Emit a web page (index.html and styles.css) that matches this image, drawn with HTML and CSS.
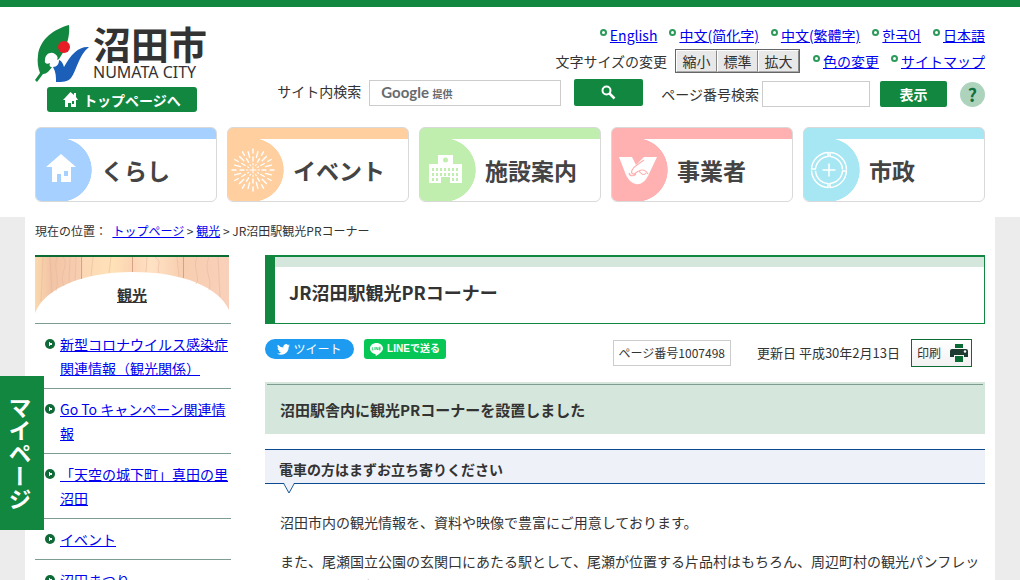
FILE: index.html
```html
<!DOCTYPE html>
<html lang="ja">
<head>
<meta charset="utf-8">
<meta name="viewport" content="width=device-width, initial-scale=1">
<title>JR沼田駅観光PRコーナー｜沼田市</title>
<link rel="stylesheet" href="styles.css">
</head>
<body>
<header class="site-header">
  <div class="inner">
    <div class="masthead">
      <div class="brand">
        <a class="logo" href="#">
          <svg class="logo-mark" viewBox="0 0 54 58" aria-hidden="true">
            <path fill="#12873f" d="M34 0C19 4 5 14 3 30C2 37 3 43 5 48L0 55L2 57L8 49C12 49 14 46 17 42C15 42 14 41 15 38C12 40 9 38 10 35C10 29 16 26 20 29C23 31 23 33 22 35L24 34L29 26C33 17 35 8 34 0Z"/>
            <path fill="#1c5fb8" d="M54 22C44 21 36 29 29 42C28 39 27 36 24 35C24 39 22 42 18 42C21 47 21 52 21 57C27 57 33 57 36 53C42 45 43 31 54 22Z"/>
            <circle cx="29" cy="22" r="6" fill="#e81c24"/>
          </svg>
          <span class="logo-text"><span class="logo-name">沼田市</span><span class="logo-roman">NUMATA CITY</span></span>
        </a>
        <a class="home-button" href="#">
          <svg width="15" height="15" viewBox="0 0 15 15" aria-hidden="true"><path fill="#fff" fill-rule="evenodd" d="M7.5 0L11 3V1h2v4l2 3h-2v7H8v-4H5v4H2V8H0zM9 9v3h2V9z"/></svg>
          トップページへ
        </a>
      </div>
      <div class="tools">
        <ul class="link-row">
          <li><a href="#" lang="en">English</a></li>
          <li><a href="#">中文(简化字)</a></li>
          <li><a href="#">中文(繁體字)</a></li>
          <li><a href="#" lang="ko">한국어</a></li>
          <li><a href="#">日本語</a></li>
        </ul>
        <div class="setting-row">
          <span>文字サイズの変更</span>
          <div class="size-buttons"><button type="button">縮小</button><button type="button">標準</button><button type="button">拡大</button></div>
          <ul class="link-row">
            <li><a href="#">色の変更</a></li>
            <li><a href="#">サイトマップ</a></li>
          </ul>
        </div>
        <div class="search-row">
          <form class="site-search">
            <label for="q">サイト内検索</label>
            <div class="search-field">
              <input id="q" type="text">
              <span class="provider">Google <small>提供</small></span>
            </div>
            <button type="button" class="green-button search-button" aria-label="検索">
              <svg width="15" height="15" viewBox="0 0 15 15" aria-hidden="true"><circle cx="5.5" cy="5.5" r="4" fill="none" stroke="#fff" stroke-width="2"/><path d="M8.5 8.5L13.5 13.5" stroke="#fff" stroke-width="2.5"/></svg>
            </button>
          </form>
          <form class="number-search">
            <label for="num">ページ番号検索</label>
            <input id="num" type="text">
            <button type="button" class="green-button show-button">表示</button>
            <a class="help" href="#">?</a>
          </form>
        </div>
      </div>
    </div>
    <nav class="global-nav">
      <a class="card blue" href="#"><span class="disc"><svg viewBox="0 0 44 44" aria-hidden="true"><path fill="#fff" fill-rule="evenodd" d="M22 6L37 19H32V34H22V26H18V34H13V19H7zM25 23v5h4v-5z"/></svg></span><span class="card-label">くらし</span></a>
      <a class="card orange" href="#"><span class="disc"><svg viewBox="0 0 44 44" aria-hidden="true">
        <defs><g id="rays"><path d="M22 1v4M22 9v4"/><path d="M22 3v6" transform="rotate(15 22 22)"/><path d="M22 15.5v1.5" stroke-width="1"/></g></defs>
        <g stroke="#fff" stroke-width="1.4" stroke-linecap="round">
          <use href="#rays"/><use href="#rays" transform="rotate(30 22 22)"/><use href="#rays" transform="rotate(60 22 22)"/><use href="#rays" transform="rotate(90 22 22)"/><use href="#rays" transform="rotate(120 22 22)"/><use href="#rays" transform="rotate(150 22 22)"/><use href="#rays" transform="rotate(180 22 22)"/><use href="#rays" transform="rotate(210 22 22)"/><use href="#rays" transform="rotate(240 22 22)"/><use href="#rays" transform="rotate(270 22 22)"/><use href="#rays" transform="rotate(300 22 22)"/><use href="#rays" transform="rotate(330 22 22)"/>
          <path stroke-width="1" d="M22 19v6M19 22h6"/>
        </g></svg></span><span class="card-label">イベント</span></a>
      <a class="card green" href="#"><span class="disc"><svg viewBox="0 0 44 44" aria-hidden="true"><path fill="#fff" d="M15 7H30V16H39V35H27V29H18V35H6V16H15z"/><circle cx="22.500" cy="12" r="2.500" fill="#c0eeae"/><path stroke="#c0eeae" stroke-width="3" stroke-dasharray="2 2" fill="none" d="M9 21.500H37M9 26.500H37M9 31.500H16M29 31.500H37"/></svg></span><span class="card-label">施設案内</span></a>
      <a class="card pink" href="#"><span class="disc"><svg viewBox="0 0 44 44" aria-hidden="true"><path fill="#fff" d="M4 9H17L21 17L29 9H42L33 28C30 34 25 37 21 36C16 35 13 31 11 27z"/><path fill="none" stroke="#ffb1b1" stroke-width="1.2" d="M29 12L22 17C17 20 15 25 18 26C21 26 22 23 24 23C27 21 31 22 33 26M14 25C15 29 19 28 21 26M31 25C29 28 26 26 24 23"/></svg></span><span class="card-label">事業者</span></a>
      <a class="card aqua" href="#"><span class="disc"><svg viewBox="0 0 44 44" aria-hidden="true"><g fill="none" stroke="#fff" stroke-width="1.5"><circle cx="22" cy="22" r="17.5" stroke-dasharray="25.5 2" stroke-dashoffset="-1"/><circle cx="22" cy="22" r="13.5" stroke-dasharray="19.2 2" stroke-dashoffset="-1"/><path d="M22 15.500v13M15.500 22h13M4 21h5M35 23h5M21 4v5M23 35v5M23 4v5M21 35v5"/></g></svg></span><span class="card-label">市政</span></a>
    </nav>
  </div>
</header>

<div class="page">
  <nav class="breadcrumb" aria-label="現在の位置">
    現在の位置：&nbsp; <a href="#">トップページ</a> &gt; <a href="#">観光</a> &gt; JR沼田駅観光PRコーナー
  </nav>
  <div class="columns">
    <aside class="sidebar">
      <h2 class="side-title">
        <svg class="wood" viewBox="0 0 194 56" preserveAspectRatio="none" aria-hidden="true">
          <defs><linearGradient id="plank"><stop offset="0" stop-color="#fbd9ac"/><stop offset=".08" stop-color="#f2c4a6"/><stop offset=".23" stop-color="#f8ceb0"/><stop offset=".25" stop-color="#fcd8b4"/><stop offset=".4" stop-color="#ffe2b8"/><stop offset=".5" stop-color="#fbd4b4"/><stop offset=".6" stop-color="#ffe2c4"/><stop offset=".76" stop-color="#f8ceb0"/><stop offset="1" stop-color="#f9d0ba"/></linearGradient></defs>
          <path fill="url(#plank)" d="M0 0H194V53C184 31 150 15 97 15C48 15 10 31 0 56z"/>
          <g fill="none" stroke="#e5b49c" stroke-width=".7" opacity=".7"><path d="M8 0L6 44M15 0L17 36M22 0C18 12 25 20 21 34M28 0C35 8 23 18 29 29M35 0L34 26M41 0L40 24M58 0L56 19M76 0L74 16M112 0L111 15M120 0C128 5 121 10 124 16M142 0L144 20M162 0C157 12 166 21 161 27M174 0C168 14 178 22 174 33M183 0L185 40"/></g>
          <path fill="none" stroke="#d6a385" d="M46.500 0V22M97.500 0V15M148.500 0V21"/>
        </svg>
        <a href="#">観光</a>
      </h2>
      <ul class="side-list">
        <li><a href="#">新型コロナウイルス感染症関連情報（観光関係）</a></li>
        <li><a href="#">Go To キャンペーン関連情報</a></li>
        <li><a href="#">「天空の城下町」真田の里沼田</a></li>
        <li><a href="#">イベント</a></li>
        <li><a href="#">沼田まつり</a></li>
      </ul>
    </aside>
    <main class="content">
      <h1>JR沼田駅観光PRコーナー</h1>
      <div class="meta">
        <a class="share tweet" href="#"><svg width="13" height="11" viewBox="0 0 24 20" aria-hidden="true"><path fill="#fff" d="M24 2.400a10 10 0 0 1-2.800.8A5 5 0 0 0 23.300.5a10 10 0 0 1-3.100 1.200 4.900 4.900 0 0 0-8.400 4.500A14 14 0 0 1 1.700 1a4.900 4.900 0 0 0 1.500 6.600A5 5 0 0 1 1 7a4.900 4.900 0 0 0 3.900 4.900 5 5 0 0 1-2.200.1 4.900 4.900 0 0 0 4.600 3.400A9.900 9.900 0 0 1 0 17.500 14 14 0 0 0 21.500 5 10 10 0 0 0 24 2.400z"/></svg>ツイート</a>
        <a class="share line" href="#"><svg width="13" height="13" viewBox="0 0 14 14" aria-hidden="true"><path fill="#fff" d="M7 0C3 0 0 2.600 0 6c0 3 2.500 5.500 6 6l.3 2C10 12 14 9 14 6c0-3.400-3-6-7-6z"/><path fill="none" stroke="#06c755" stroke-width=".8" d="M2.500 4.500v3h1.500M5.200 4.500v3M6.500 7.500v-3l2 3v-3M11.500 4.500H10v3h1.500M10 6h1.500"/></svg>LINEで送る</a>
        <span class="page-number">ページ番号1007498</span>
        <span class="updated">更新日 平成30年2月13日</span>
        <button type="button" class="print">印刷<svg width="20" height="20" viewBox="0 0 20 20" aria-hidden="true"><path fill="#0b6b35" d="M6 1h8v4H6z"/><path fill="#1f3a30" d="M3 6h14a2 2 0 0 1 2 2v6h-4v-2H5v2H1V8a2 2 0 0 1 2-2z"/><path fill="#0b6b35" d="M6 13h8v6H6z"/><circle cx="16" cy="8.500" r="1.200" fill="#fff"/></svg></button>
      </div>
      <h2 class="section-title">沼田駅舎内に観光PRコーナーを設置しました</h2>
      <h3 class="sub-title">電車の方はまずお立ち寄りください<svg class="pointer" width="12" height="11" viewBox="0 0 12 11" aria-hidden="true"><path fill="#eef1f7" d="M1 0H11L6 10z"/><path fill="none" stroke="#1a5a9c" d="M1 1L6 10L11 1"/></svg></h3>
      <p>沼田市内の観光情報を、資料や映像で豊富にご用意しております。</p>
      <p>また、尾瀬国立公園の玄関口にあたる駅として、尾瀬が位置する片品村はもちろん、周辺町村の観光パンフレットを設置しております。</p>
    </main>
  </div>
</div>
<a class="my-page" href="#">マイページ</a>
</body>
</html>
```

FILE: styles.css
```css
*, *::before, *::after { box-sizing: border-box; }

body {
  margin: 0;
  background: #ececec;
  color: #333;
  font: 14px/24px "Noto Sans CJK JP", sans-serif;
}

a { color: #00e; }
ul { margin: 0; padding: 0; list-style: none; }
svg { display: block; flex: none; }
button, input { font: inherit; color: inherit; margin: 0; }

/* Header */
.site-header {
  border-top: 7px solid #12873f;
  background: #fff;
  padding: 18px 0 15px;
}

.inner, .page {
  max-width: 970px;
  margin: 0 auto;
  padding: 0 10px;
}

.masthead {
  display: flex;
  justify-content: space-between;
  align-items: flex-start;
  margin-bottom: 15px;
}

.logo {
  display: flex;
  gap: 4px;
  color: #333;
  text-decoration: none;
}

.logo-mark { width: 54px; height: 58px; }
.logo-text { display: flex; flex-direction: column; }
.logo-name { font-size: 38px; line-height: 36px; font-weight: 700; }
.logo-roman { font: 16px/22px "Noto Sans", sans-serif; }

.home-button {
  display: flex;
  align-items: center;
  justify-content: center;
  gap: 5px;
  width: 150px;
  height: 25px;
  margin: 4px 0 0 12px;
  border-radius: 3px;
  background: #12873f;
  color: #fff;
  font-weight: 700;
  text-decoration: none;
}

.tools {
  display: flex;
  flex-direction: column;
  align-items: flex-end;
}

.link-row {
  display: flex;
  gap: 12px;
  line-height: 20px;
}

.link-row li {
  display: flex;
  gap: 3px;
}

.link-row li::before {
  content: "";
  width: 7px;
  height: 7px;
  margin-top: 4px;
  border: 2px solid #2c9a5a;
  border-radius: 50%;
}

.setting-row {
  display: flex;
  align-items: center;
  margin: 4px 0 6px;
}

.size-buttons {
  display: flex;
  margin: 0 13px 0 8px;
  border: 1px solid #666;
}

.size-buttons button {
  width: 41px;
  height: 22px;
  padding: 0;
  border: 1px solid;
  border-color: #fff #888 #aaa #fff;
  background: #e8e8e8;
  line-height: 20px;
}

.search-row { display: flex; align-items: flex-start; }
.site-search, .number-search { display: flex; align-items: center; }
.site-search { margin-right: 18px; }
.site-search label { padding-bottom: 3px; }
.number-search { padding-top: 2px; }

.search-row input {
  height: 26px;
  padding: 0 8px;
  border: 1px solid #ccc;
  background: #fff;
}

.search-field {
  position: relative;
  display: flex;
  margin: 0 13px 0 8px;
}

.search-field input { width: 192px; }

.provider {
  position: absolute;
  left: 12px;
  top: 0;
  color: #666b70;
  font: 700 15px/24px Lato, "Noto Sans CJK JP", sans-serif;
  pointer-events: none;
}

.provider small { font-size: 10px; font-weight: 700; }

.green-button {
  display: flex;
  align-items: center;
  justify-content: center;
  padding: 0;
  border: 0;
  border-radius: 2px;
  background: #12873f;
  color: #fff;
  font-weight: 700;
}

.search-button { width: 69px; height: 27px; }
.number-search input { width: 108px; margin: 0 10px 0 3px; }
.show-button { width: 67px; height: 26px; }

.help {
  width: 25px;
  height: 25px;
  margin-left: 13px;
  border-radius: 50%;
  background: #aed3bd;
  color: #127040;
  font-size: 18px;
  font-weight: 700;
  text-align: center;
  text-decoration: none;
}

/* Global navigation */
.global-nav {
  display: grid;
  grid-template-columns: repeat(5, 1fr);
  gap: 10px;
}

.card {
  display: flex;
  align-items: center;
  height: 75px;
  padding-top: 11px;
  border: 1px solid #d9d9d9;
  border-radius: 6px;
  background: linear-gradient(var(--tint) 11px, #fff 11px);
  color: #444;
  text-decoration: none;
  overflow: hidden;
}

.disc {
  display: flex;
  align-items: center;
  justify-content: flex-end;
  width: 56px;
  height: 62px;
  padding-right: 9px;
  background: radial-gradient(circle 32px at 24px 31px, var(--tint) 98%, transparent), linear-gradient(90deg, var(--tint) 24px, transparent 24px);
}

.disc svg { width: 44px; height: 44px; }
.card-label { margin-left: 9px; font-size: 23px; line-height: 36px; font-weight: 700; }
.blue { --tint: #a6d0ff; }
.orange { --tint: #ffcfa0; }
.green { --tint: #c0eeae; }
.pink { --tint: #ffb1b1; }
.aqua { --tint: #a6e7f3; }

/* Page body */
.page { background: #fff; padding-bottom: 20px; }

.breadcrumb {
  padding: 4px 0 14px;
  font-size: 12px;
  line-height: 20px;
}

.columns {
  display: grid;
  grid-template-columns: 196px 1fr;
  gap: 34px;
}

.side-title {
  position: relative;
  height: 68px;
  margin: 0 2px 0 0;
  padding-top: 26px;
  border-top: 2px solid #0b6b35;
  font-size: 15px;
  text-align: center;
}

.side-title a { position: relative; color: #333; }

.wood {
  position: absolute;
  left: 0;
  top: 0;
  width: 100%;
  height: 56px;
}

.side-list li {
  display: flex;
  gap: 5px;
  padding: 8px 0 8px 10px;
  border-top: 1px solid #7d9c92;
}

.side-list li::before {
  content: "";
  flex: none;
  width: 10px;
  height: 10px;
  margin-top: 7px;
  border-radius: 50%;
  background:
    conic-gradient(from 240deg at 7px 5px, #fff 60deg, transparent 0) 0 0 / 0 0 no-repeat,
    linear-gradient(#fff, #fff) 4px 3px / 1px 4px no-repeat,
    linear-gradient(#fff, #fff) 5px 4px / 2px 2px no-repeat,
    #0f6a38;
}

h1 {
  margin: 0;
  padding: 17px 14px 13px;
  border: 1px solid #12873f;
  border-width: 2px 1px 1px 10px;
  background: linear-gradient(#d5e6dc 10px, #fff 10px);
  font-size: 18px;
  line-height: 36px;
}

.meta {
  display: flex;
  align-items: flex-start;
  padding: 15px 13px 15px 0;
}

.share {
  display: flex;
  align-items: center;
  justify-content: center;
  height: 20px;
  color: #fff;
  text-decoration: none;
}

.tweet {
  gap: 3px;
  width: 89px;
  margin-right: 10px;
  border-radius: 10px;
  background: #1d9bf0;
  font-size: 12px;
}

.line {
  gap: 4px;
  width: 82px;
  border-radius: 3px;
  background: #06c755;
  font-family: "Liberation Sans", "Noto Sans CJK JP", sans-serif;
  font-size: 10px;
  font-weight: 700;
}

.page-number {
  margin: 1px 26px 0 auto;
  padding: 0 5px;
  border: 1px solid #ccc;
  font-size: 12px;
}

.updated {
  margin: 2px 11px 0 0;
  font-size: 13px;
}

.print {
  display: flex;
  align-items: center;
  gap: 8px;
  height: 28px;
  padding: 0 2px 0 5px;
  border: 1px solid #0b6b35;
  background: linear-gradient(#fff, #f2f2f2);
  font-size: 12px;
}

.section-title {
  margin: 0 0 15px;
  padding: 16px 15px 12px;
  background: linear-gradient(#7d9c92, #7d9c92) 2px 2px / calc(100% - 4px) 1px no-repeat, #d5e6dc;
  font-size: 15px;
}

.sub-title {
  position: relative;
  margin: 0 0 26px;
  padding: 7px 14px 2px;
  border: 1px solid #0a4a8f;
  border-width: 1px 0;
  background: #eef1f7;
  font-size: 14px;
}

.pointer {
  position: absolute;
  left: 18px;
  top: 33px;
}

.content p { margin: 0 0 15px 15px; }

.my-page {
  position: fixed;
  left: 0;
  top: 376px;
  width: 44px;
  height: 154px;
  padding-right: 4px;
  background: #12873f;
  color: #fff;
  font-size: 23px;
  line-height: 40px;
  font-weight: 700;
  text-align: center;
  text-decoration: none;
  writing-mode: vertical-rl;
}
```
